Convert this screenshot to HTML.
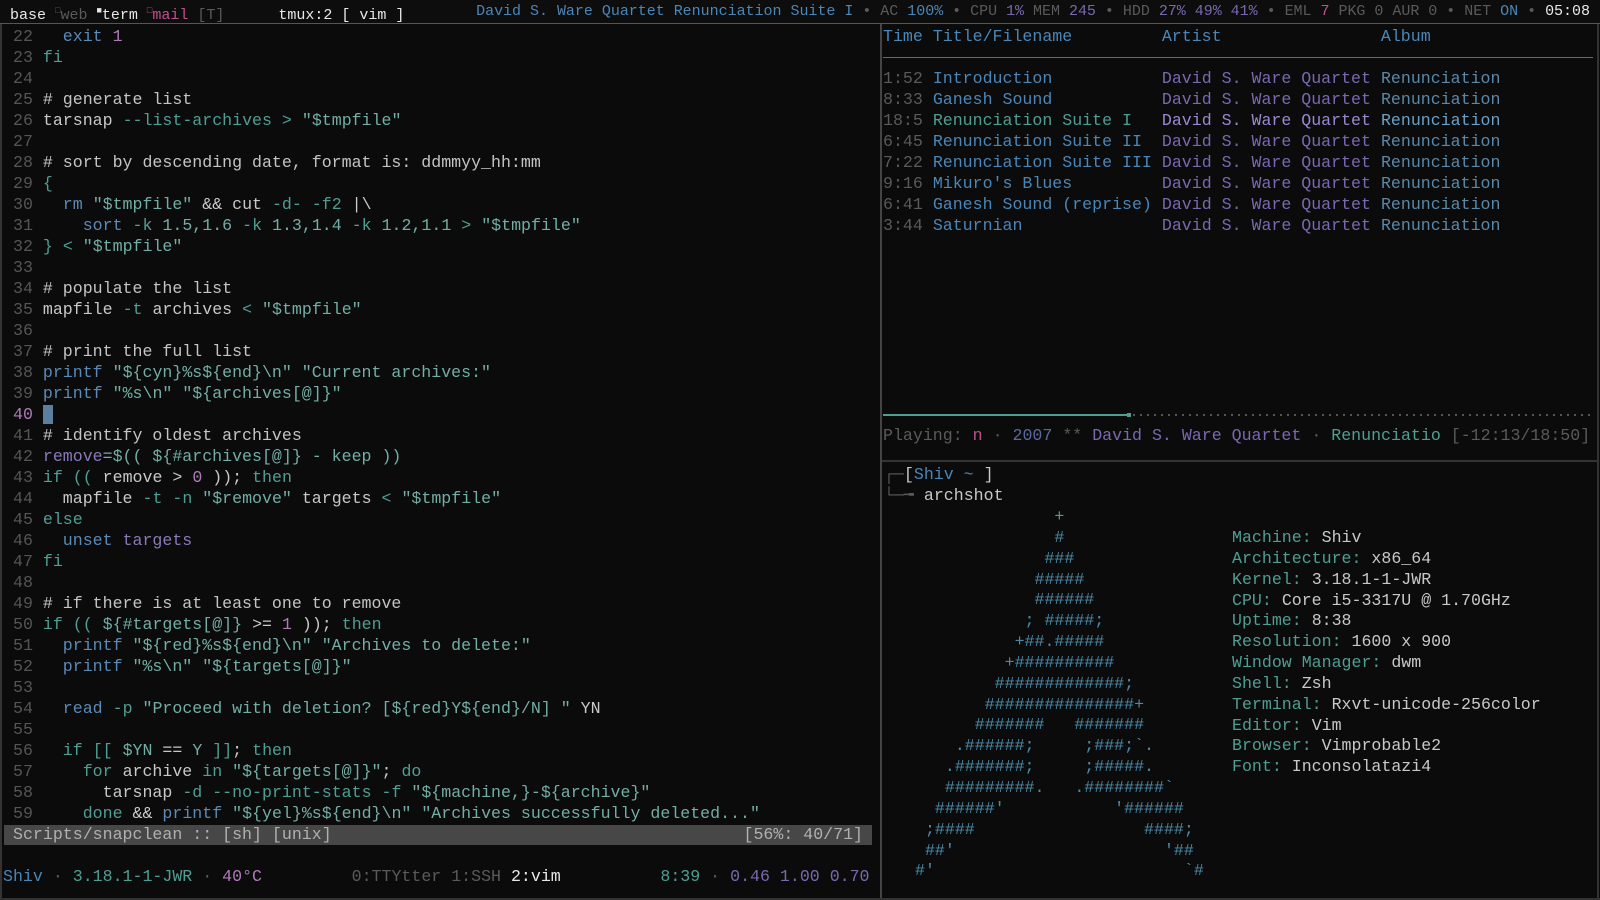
<!DOCTYPE html>
<html><head><meta charset="utf-8"><style>
*{margin:0;padding:0;box-sizing:border-box}
body{width:1600px;height:900px;background:#0b0b0b;overflow:hidden;position:relative;font-family:"Liberation Mono","DejaVu Sans Mono",monospace;color:#c8c8c8}
pre{font-family:inherit;position:absolute;white-space:pre;font-size:16.6px;line-height:21px}
.top{position:absolute;left:0;top:0;width:1600px;height:24px;background:#0d0d0d;border-bottom:1px solid #555}
.top pre{font-size:15px;line-height:23px;top:0}
.g{color:#5a5a5a}.w{color:#e8e8e8}.d{color:#c8c8c8}
.k{color:#4f9e94}.b{color:#5a8ab8}.s{color:#72aea6}.v{color:#8a78b8}.n{color:#b07ab8}.c{color:#c4c4c4}
.bl{color:#4a86b8}.pu{color:#7a68b0}.pk{color:#c0508a}.al{color:#5a88a8}
.ln{color:#555}
.cur{background:#5b7f9f}
</style></head><body>
<div class="top">
<pre style="left:10px"><span class="w">base</span> <span class="g" style="font-size:9px;vertical-align:6px">□</span><span class="g">web</span> <span class="w" style="font-size:9px;vertical-align:6px">■</span><span class="w">term</span> <span class="pk" style="font-size:9px;vertical-align:6px">□</span><span class="pk">mail</span> <span class="g">[T]</span>      <span class="w">tmux:2 [ vim ]</span></pre>
<pre style="right:10px;letter-spacing:-0.02px"><span class="bl">David S. Ware Quartet Renunciation Suite I</span> <span class="g">•</span> <span class="g">AC</span> <span class="bl">100%</span> <span class="g">•</span> <span class="g">CPU</span> <span class="pu">1%</span> <span class="g">MEM</span> <span class="pu">245</span> <span class="g">•</span> <span class="g">HDD</span> <span class="pu">27% 49% 41%</span> <span class="g">•</span> <span class="g">EML</span> <span class="pk">7</span> <span class="g">PKG 0 AUR 0</span> <span class="g">•</span> <span class="g">NET</span> <span class="bl">ON</span> <span class="g">•</span> <span class="w">05:08</span></pre>
</div>
<div style="position:absolute;left:880px;top:24px;width:2px;height:876px;background:#444"></div>
<div style="position:absolute;left:1597px;top:24px;width:2px;height:876px;background:#333"></div>
<div style="position:absolute;left:0;top:898px;width:1600px;height:2px;background:#333"></div>
<div style="position:absolute;left:0;top:24px;width:2px;height:876px;background:#333"></div>

<pre style="left:13px;top:26px"><span class="ln">22</span>   <span class="b">exit</span> <span class="n">1</span>
<span class="ln">23</span> <span class="k">fi</span>
<span class="ln">24</span>
<span class="ln">25</span> <span class="c"># generate list</span>
<span class="ln">26</span> <span class="d">tarsnap</span> <span class="k">--list-archives</span> <span class="k">&gt;</span> <span class="s">"$tmpfile"</span>
<span class="ln">27</span>
<span class="ln">28</span> <span class="c"># sort by descending date, format is: ddmmyy_hh:mm</span>
<span class="ln">29</span> <span class="k">{</span>
<span class="ln">30</span>   <span class="b">rm</span> <span class="s">"$tmpfile"</span> <span class="d">&amp;&amp; cut</span> <span class="k">-d- -f2</span> <span class="d">|\</span>
<span class="ln">31</span>     <span class="b">sort</span> <span class="k">-k</span> <span class="s">1.5,1.6</span> <span class="k">-k</span> <span class="s">1.3,1.4</span> <span class="k">-k</span> <span class="s">1.2,1.1</span> <span class="k">&gt;</span> <span class="s">"$tmpfile"</span>
<span class="ln">32</span> <span class="k">}</span> <span class="k">&lt;</span> <span class="s">"$tmpfile"</span>
<span class="ln">33</span>
<span class="ln">34</span> <span class="c"># populate the list</span>
<span class="ln">35</span> <span class="d">mapfile</span> <span class="k">-t</span> <span class="d">archives</span> <span class="k">&lt;</span> <span class="s">"$tmpfile"</span>
<span class="ln">36</span>
<span class="ln">37</span> <span class="c"># print the full list</span>
<span class="ln">38</span> <span class="b">printf</span> <span class="s">"${cyn}%s${end}\n" "Current archives:"</span>
<span class="ln">39</span> <span class="b">printf</span> <span class="s">"%s\n" "${archives[@]}"</span>
<span class="n">40</span> <span class="cur"> </span>
<span class="ln">41</span> <span class="c"># identify oldest archives</span>
<span class="ln">42</span> <span class="v">remove</span><span class="s">=$(( ${#archives[@]} - keep ))</span>
<span class="ln">43</span> <span class="k">if</span> <span class="k">((</span> <span class="d">remove &gt;</span> <span class="n">0</span> <span class="d">));</span> <span class="k">then</span>
<span class="ln">44</span>   <span class="d">mapfile</span> <span class="k">-t -n</span> <span class="s">"$remove"</span> <span class="d">targets</span> <span class="k">&lt;</span> <span class="s">"$tmpfile"</span>
<span class="ln">45</span> <span class="k">else</span>
<span class="ln">46</span>   <span class="b">unset</span> <span class="v">targets</span>
<span class="ln">47</span> <span class="k">fi</span>
<span class="ln">48</span>
<span class="ln">49</span> <span class="c"># if there is at least one to remove</span>
<span class="ln">50</span> <span class="k">if</span> <span class="k">((</span> <span class="s">${#targets[@]}</span> <span class="d">&gt;=</span> <span class="n">1</span> <span class="d">));</span> <span class="k">then</span>
<span class="ln">51</span>   <span class="b">printf</span> <span class="s">"${red}%s${end}\n" "Archives to delete:"</span>
<span class="ln">52</span>   <span class="b">printf</span> <span class="s">"%s\n" "${targets[@]}"</span>
<span class="ln">53</span>
<span class="ln">54</span>   <span class="b">read</span> <span class="k">-p</span> <span class="s">"Proceed with deletion? [${red}Y${end}/N] "</span> <span class="d">YN</span>
<span class="ln">55</span>
<span class="ln">56</span>   <span class="k">if</span> <span class="k">[[</span> <span class="s">$YN</span> <span class="d">==</span> <span class="s">Y</span> <span class="k">]]</span><span class="d">;</span> <span class="k">then</span>
<span class="ln">57</span>     <span class="k">for</span> <span class="d">archive</span> <span class="k">in</span> <span class="s">"${targets[@]}"</span><span class="d">;</span> <span class="k">do</span>
<span class="ln">58</span>       <span class="d">tarsnap</span> <span class="k">-d --no-print-stats -f</span> <span class="s">"${machine,}-${archive}"</span>
<span class="ln">59</span>     <span class="k">done</span> <span class="d">&amp;&amp;</span> <span class="b">printf</span> <span class="s">"${yel}%s${end}\n" "Archives successfully deleted..."</span></pre>

<div style="position:absolute;left:4px;top:825px;width:868px;height:20px;background:#474747"></div>
<pre style="left:13px;top:825px;line-height:20px;color:#b0b0b0">Scripts/snapclean :: [sh] [unix]</pre>
<pre style="right:737px;top:825px;line-height:20px;color:#b0b0b0">[56%: 40/71]</pre>

<pre style="left:3px;top:866px"><span class="bl">Shiv</span> <span class="g">·</span> <span class="k">3.18.1-1-JWR</span> <span class="g">·</span> <span class="n">40°C</span>         <span class="g">0:TTYtter 1:SSH</span> <span class="w">2:vim</span>          <span class="k">8:39</span> <span class="g">·</span> <span class="pu">0.46 1.00 0.70</span></pre>

<pre style="left:883px;top:26px"><span class="bl">Time Title/Filename         Artist                Album</span></pre>
<div style="position:absolute;left:883px;top:57px;width:710px;height:1px;background:#4a7090"></div>
<pre style="left:883px;top:68px"><span class="g">1:52</span> <span class="bl">Introduction</span>           <span class="pu">David S. Ware Quartet</span> <span class="al">Renunciation</span>
<span class="g">8:33</span> <span class="bl">Ganesh Sound</span>           <span class="pu">David S. Ware Quartet</span> <span class="al">Renunciation</span>
<span class="g">18:5</span> <span class="k">Renunciation Suite I</span>   <span style="color:#9a88d0">David S. Ware Quartet</span> <span style="color:#6aa0c8">Renunciation</span>
<span class="g">6:45</span> <span class="bl">Renunciation Suite II</span>  <span class="pu">David S. Ware Quartet</span> <span class="al">Renunciation</span>
<span class="g">7:22</span> <span class="bl">Renunciation Suite III</span> <span class="pu">David S. Ware Quartet</span> <span class="al">Renunciation</span>
<span class="g">9:16</span> <span class="bl">Mikuro's Blues</span>         <span class="pu">David S. Ware Quartet</span> <span class="al">Renunciation</span>
<span class="g">6:41</span> <span class="bl">Ganesh Sound (reprise)</span> <span class="pu">David S. Ware Quartet</span> <span class="al">Renunciation</span>
<span class="g">3:44</span> <span class="bl">Saturnian</span>              <span class="pu">David S. Ware Quartet</span> <span class="al">Renunciation</span></pre>
<div style="position:absolute;left:883px;top:414px;width:246px;height:2px;background:#4f9e94"></div>
<div style="position:absolute;left:1127px;top:413px;width:4px;height:4px;background:#4f9e94"></div>
<div style="position:absolute;left:1133px;top:414px;width:460px;height:2px;background:repeating-linear-gradient(90deg,#555 0 2px,transparent 2px 7px)"></div>
<pre style="left:883px;top:425px"><span class="g">Playing:</span> <span class="pk">n</span> <span class="g">·</span> <span style="color:#5a6aa0">2007</span> <span class="g">**</span> <span class="pu">David S. Ware Quartet</span> <span class="g">·</span> <span class="k">Renunciatio</span> <span class="g">[-12:13/18:50]</span></pre>
<div style="position:absolute;left:882px;top:460px;width:716px;height:2px;background:#333"></div>

<pre style="left:884px;top:465px;line-height:20.85px"><span class="g">┌─</span><span class="d">[</span><span class="bl">Shiv ~ </span><span class="d">]</span>
<span class="g">└─╼</span> <span class="d">archshot</span></pre>
<pre style="left:915px;top:507px;line-height:20.85px;color:#4a8aa8">              <span class="k">+</span>
              #
             ###
            #####
            ######
           ; #####;
          +##.#####
         +##########
        #############;
       ###############+
      #######   #######
    .######;     ;###;`.
   .#######;     ;#####.
   #########.   .########`
  ######'           '######
 ;####                 ####;
 ##'                     '##
#'                         `#</pre>
<pre style="left:1232px;top:528px;line-height:20.85px"><span class="k">Machine:</span> <span class="d">Shiv</span>
<span class="k">Architecture:</span> <span class="d">x86_64</span>
<span class="k">Kernel:</span> <span class="d">3.18.1-1-JWR</span>
<span class="k">CPU:</span> <span class="d">Core i5-3317U @ 1.70GHz</span>
<span class="k">Uptime:</span> <span class="d">8:38</span>
<span class="k">Resolution:</span> <span class="d">1600 x 900</span>
<span class="k">Window Manager:</span> <span class="d">dwm</span>
<span class="k">Shell:</span> <span class="d">Zsh</span>
<span class="k">Terminal:</span> <span class="d">Rxvt-unicode-256color</span>
<span class="k">Editor:</span> <span class="d">Vim</span>
<span class="k">Browser:</span> <span class="d">Vimprobable2</span>
<span class="k">Font:</span> <span class="d">Inconsolatazi4</span></pre>
</body></html>
